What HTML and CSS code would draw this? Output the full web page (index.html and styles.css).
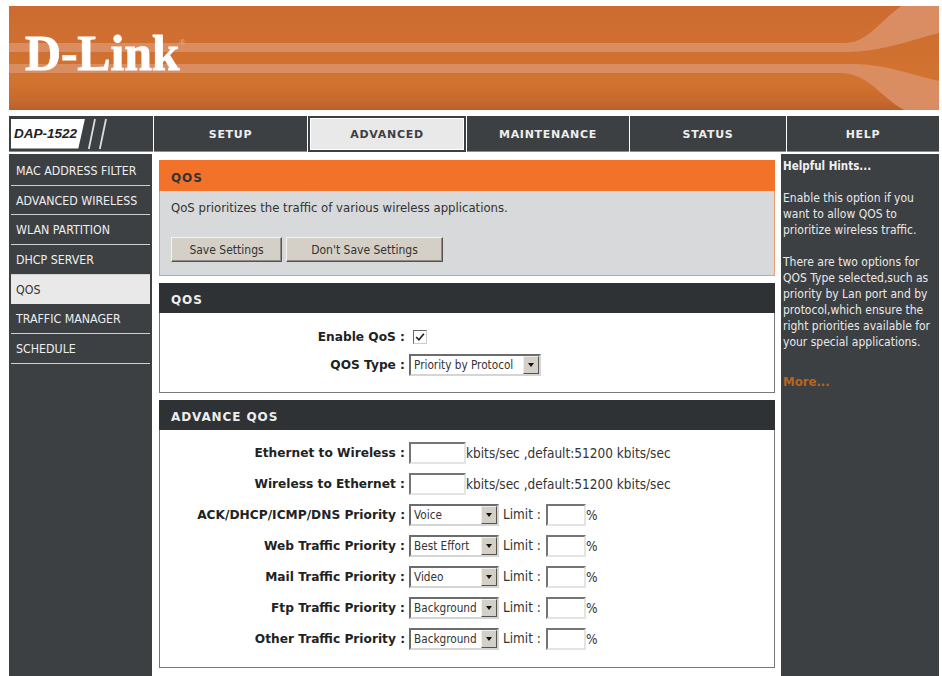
FILE: index.html
```html
<!DOCTYPE html>
<html lang="en">
<head>
<meta charset="utf-8">
<title>D-Link DAP-1522 QoS</title>
<link rel="stylesheet" href="styles.css">
</head>
<body>
<div class="page">
  <header class="banner">
    <svg class="banner-art" viewBox="0 0 930 104" preserveAspectRatio="none" aria-hidden="true">
      <defs>
        <linearGradient id="bg" x1="0" y1="0" x2="0" y2="1">
          <stop offset="0" stop-color="#cd6b30"/>
          <stop offset="0.72" stop-color="#d27430"/>
          <stop offset="0.9" stop-color="#c96a2e"/>
          <stop offset="1" stop-color="#bc5e2c"/>
        </linearGradient>
      </defs>
      <rect width="930" height="104" fill="url(#bg)"/>
      <path d="M0 37H835C858 37 868 18 892 0H930V27C900 35 870 46 838 46H0Z" fill="#dc9068" opacity=".9"/>
      <path d="M0 58H845C875 58 900 68 930 75V104H895C870 90 860 67 830 67H0Z" fill="#dc9068" opacity=".9"/>
    </svg>
    <div class="logo">D-Link<sup class="reg">®</sup></div>
  </header>

  <nav class="tabs">
    <div class="tab model-cell">
      <span class="model">DAP-1522</span>
      <svg class="slashes" viewBox="0 0 26 32" aria-hidden="true"><path d="M7 1 .8 31M18 1 11.8 31" stroke="#dcdcdc" stroke-width="1.8" fill="none"/></svg>
    </div>
    <div class="tab tab-setup">SETUP</div>
    <div class="tab tab-advanced active">ADVANCED</div>
    <div class="tab tab-maint">MAINTENANCE</div>
    <div class="tab tab-status">STATUS</div>
    <div class="tab tab-help">HELP</div>
  </nav>

  <div class="main">
    <aside class="side">
      <a class="side-item">MAC ADDRESS FILTER</a>
      <a class="side-item">ADVANCED WIRELESS</a>
      <a class="side-item">WLAN PARTITION</a>
      <a class="side-item">DHCP SERVER</a>
      <a class="side-item current">QOS</a>
      <a class="side-item">TRAFFIC MANAGER</a>
      <a class="side-item">SCHEDULE</a>
    </aside>

    <main class="content">
      <section class="card intro">
        <h2 class="card-title intro-title">QOS</h2>
        <div class="intro-body">
          <p class="intro-text">QoS prioritizes the traffic of various wireless applications.</p>
          <div class="buttons">
            <button class="btn btn-save" type="button">Save Settings</button>
            <button class="btn btn-nosave" type="button">Don't Save Settings</button>
          </div>
        </div>
      </section>

      <section class="card box">
        <h2 class="card-title">QOS</h2>
        <div class="form form-qos">
          <div class="row">
            <label class="label">Enable QoS :</label>
            <span class="check"><svg viewBox="0 0 9 9" aria-hidden="true"><path d="M1 4.5 3.5 7 8 1.5" stroke="#222" stroke-width="1.5" fill="none"/></svg></span>
          </div>
          <div class="row">
            <label class="label">QOS Type :</label>
            <span class="sel sel-type"><select><option>Priority by Protocol</option></select><i class="arrow"></i></span>
          </div>
        </div>
      </section>

      <section class="card box">
        <h2 class="card-title">ADVANCE QOS</h2>
        <div class="form form-adv">
          <div class="row">
            <label class="label">Ethernet to Wireless :</label>
            <input class="field field-rate" type="text"><span class="note">kbits/sec ,default:51200 kbits/sec</span>
          </div>
          <div class="row">
            <label class="label">Wireless to Ethernet :</label>
            <input class="field field-rate" type="text"><span class="note">kbits/sec ,default:51200 kbits/sec</span>
          </div>
          <div class="row">
            <label class="label">ACK/DHCP/ICMP/DNS Priority :</label>
            <span class="sel"><select><option>Voice</option></select><i class="arrow"></i></span>
            <span class="limit">Limit :</span><input class="field field-limit" type="text"><span class="note">%</span>
          </div>
          <div class="row">
            <label class="label">Web Traffic Priority :</label>
            <span class="sel"><select><option>Best Effort</option></select><i class="arrow"></i></span>
            <span class="limit">Limit :</span><input class="field field-limit" type="text"><span class="note">%</span>
          </div>
          <div class="row">
            <label class="label">Mail Traffic Priority :</label>
            <span class="sel"><select><option>Video</option></select><i class="arrow"></i></span>
            <span class="limit">Limit :</span><input class="field field-limit" type="text"><span class="note">%</span>
          </div>
          <div class="row">
            <label class="label">Ftp Traffic Priority :</label>
            <span class="sel"><select><option>Background</option></select><i class="arrow"></i></span>
            <span class="limit">Limit :</span><input class="field field-limit" type="text"><span class="note">%</span>
          </div>
          <div class="row">
            <label class="label">Other Traffic Priority :</label>
            <span class="sel"><select><option>Background</option></select><i class="arrow"></i></span>
            <span class="limit">Limit :</span><input class="field field-limit" type="text"><span class="note">%</span>
          </div>
        </div>
      </section>
    </main>

    <aside class="hints">
      <h3 class="hints-title">Helpful Hints...</h3>
      <p class="hint">Enable this option if you want to allow QOS to prioritize wireless traffic.</p>
      <p class="hint">There are two options for QOS Type selected,such as priority by Lan port and by protocol,which ensure the right priorities available for your special applications.</p>
      <a class="more">More...</a>
    </aside>
  </div>
</div>
</body>
</html>
```
FILE: styles.css
```css
* { box-sizing: border-box; }
html, body { margin: 0; height: 100%; overflow: hidden; background: #fff; }
body { font-family: "DejaVu Sans Condensed", "DejaVu Sans", sans-serif; font-stretch: condensed; font-size: 12px; color: #333; }
.page { width: 930px; height: 676px; margin: 6px 0 0 9px; display: flex; flex-direction: column; }

.banner { position: relative; height: 104px; flex: none; }
.banner-art { display: block; width: 930px; height: 104px; }
.logo { position: absolute; left: 16px; top: 20px; font-family: "Liberation Serif", serif; font-stretch: normal; font-weight: 700; font-size: 50px; line-height: 54px; letter-spacing: -.2px; color: #fff; -webkit-text-stroke: .8px #fff; }
.reg { font-family: "Liberation Sans", sans-serif; font-size: 8px; font-weight: 400; color: #e6b08c; -webkit-text-stroke: 0; vertical-align: 25px; line-height: 0; }

.tabs { margin-top: 6px; height: 36px; flex: none; display: flex; gap: 1px; background: #fff; }
.tab { background: #3d4043; color: #eee; display: flex; align-items: center; justify-content: center; padding-top: 1px; font-family: "DejaVu Sans", sans-serif; font-stretch: normal; font-weight: 700; font-size: 11px; letter-spacing: .7px; border-bottom: 1px solid #8b8d8f; }
.model-cell { width: 144px; justify-content: flex-start; padding: 0 0 0 2px; gap: 3px; }
.tab-setup { width: 153px; }
.tab-advanced { width: 158px; }
.tab-maint { width: 162px; }
.tab-status { width: 156px; }
.tab-help { width: 152px; }
.active { background: #e9e9e9; color: #3d4043; border: 2px solid #3d4043; outline: 1px solid #fff; outline-offset: -3px; }
.model { width: 74px; height: 30px; background: #fff; color: #222; clip-path: polygon(0 0, 100% 0, 91% 100%, 0 100%); font-family: "Liberation Sans", sans-serif; font-size: 13.5px; font-style: italic; font-weight: 700; letter-spacing: 0; line-height: 30px; padding-left: 3px; }
.slashes { width: 26px; height: 32px; }

.main { margin-top: 2px; flex: 1; display: flex; min-height: 0; }
.side { width: 143px; flex: none; background: #3d4043; padding: 2px 2px 0; }
.side-item { display: block; height: 29.7px; padding-left: 5px; line-height: 31px; font-size: 12.3px; color: #eee; border-bottom: 1px solid #cfd0d0; }
.current { background: #e9e9e9; color: #333; border-bottom: 0; }

.content { width: 616px; flex: none; margin-left: 7px; padding-top: 6px; display: flex; flex-direction: column; gap: 7px; }
.card-title { margin: 0; height: 30px; padding-left: 12px; line-height: 35px; background: #2f3235; color: #eee; font-family: "DejaVu Sans", sans-serif; font-stretch: normal; font-size: 12px; font-weight: 700; letter-spacing: .9px; }
.intro-title { height: 31px; background: #f3722a; color: #333; line-height: 36px; }
.intro-body { height: 85px; background: #d8d9da; border: 1px solid #ef9a6c; border-top: 0; padding: 0 11px; }
.intro-text { margin: 0; padding-top: 8px; line-height: 18px; font-size: 13px; }
.buttons { display: flex; gap: 4px; margin-top: 20px; }
.btn { height: 25px; padding: 0; background: #d4d0c8; color: #333; font: inherit; border: 1px solid; border-color: #f4f3ef #55534e #55534e #f4f3ef; box-shadow: inset -1px -1px 0 #8e8b84; }
.btn-save { width: 111px; }
.btn-nosave { width: 157px; }

.box { background: #fff; }
.form { border: 1px solid #77797b; border-top: 0; }
.form-qos { height: 80px; padding-top: 10px; }
.form-adv { height: 238px; padding-top: 7px; }
.row { display: flex; align-items: center; height: 31px; }
.form-qos .row { height: 28px; }
.label { width: 248px; flex: none; text-align: right; padding-right: 3px; font-family: "DejaVu Sans", sans-serif; font-stretch: normal; font-weight: 700; font-size: 12.2px; color: #222; white-space: nowrap; }
.check { width: 14px; height: 14px; margin-left: 5px; padding: 1px; border: 1px solid; border-color: #666 #ccc #ccc #666; background: #fff; display: flex; }
.check svg { width: 10px; height: 10px; }
.sel { position: relative; display: block; width: 90px; height: 22px; margin-left: 1px; flex: none; }
.sel-type { width: 132px; }
.sel select { appearance: none; width: 100%; height: 100%; margin: 0; padding: 0 0 0 3px; background: #fff; color: #333; font-family: inherit; font-stretch: condensed; font-size: 11.7px; border: 2px solid; border-color: #6c6c6c #d5d5d5 #d5d5d5 #6c6c6c; border-radius: 0; }
.arrow { position: absolute; right: 2px; top: 2px; bottom: 2px; width: 16px; background: #d4d0c8; border: 1px solid; border-color: #eee #55534e #55534e #eee; }
.arrow::after { content: ""; position: absolute; left: 4px; top: 6px; border: 3px solid transparent; border-top: 4px solid #111; border-bottom: 0; }
.field { height: 22px; margin: 0; padding: 0; background: #fff; border: 2px solid; border-color: #757575 #e4e4e4 #e4e4e4 #757575; border-radius: 0; flex: none; }
.field-rate { width: 57px; margin-left: 1px; }
.field-limit { width: 40px; }
.note { margin-left: 0; color: #333; font-size: 13.5px; }
.limit { width: 47px; padding-left: 4px; flex: none; color: #333; font-size: 13.4px; white-space: nowrap; }

.hints { width: 158px; flex: none; margin-left: 6px; background: #3d4043; color: #e8e8e8; padding: 4px 2px 0 2px; font-size: 12px; line-height: 16px; }
.hints-title { margin: 0 0 16px; font-size: 11.5px; font-weight: 700; line-height: 16px; color: #f0f0f0; font-stretch: condensed; }
.hint { margin: 0 0 16px; }
.more { display: block; margin-top: 24px; color: #b8651e; font-size: 13px; font-weight: 700; }
```
